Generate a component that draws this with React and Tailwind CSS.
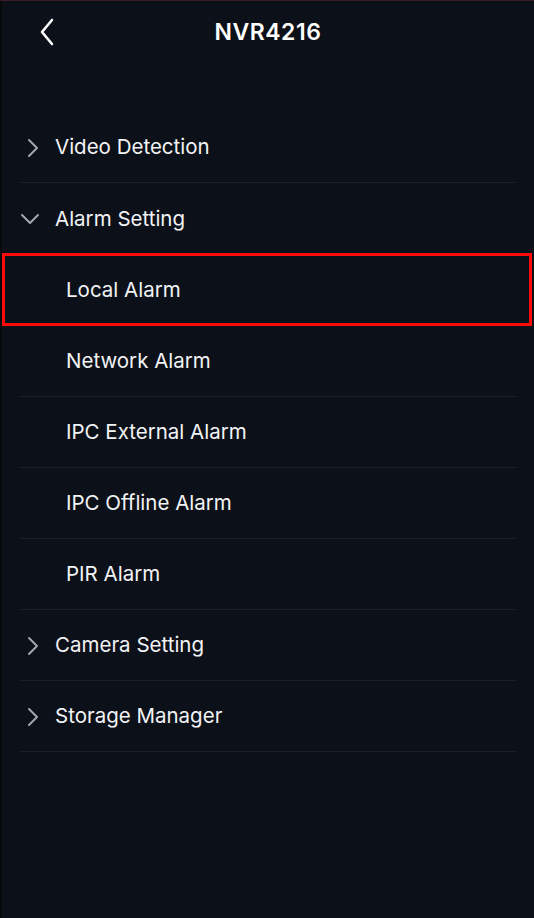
import React from "react";

const font = { fontFamily: "Inter, 'Noto Sans', sans-serif" };

function ChevronRight() {
  return (
    <svg width="14" height="20" viewBox="0 0 14 20" className="shrink-0">
      <path d="M3 2 L11 10 L3 18" fill="none" stroke="#a3a6ab" strokeWidth="2" strokeLinecap="round" strokeLinejoin="round" />
    </svg>
  );
}
function ChevronDown() {
  return (
    <svg width="20" height="14" viewBox="0 0 20 14" className="shrink-0">
      <path d="M2 3 L10 11 L18 3" fill="none" stroke="#a3a6ab" strokeWidth="2" strokeLinecap="round" strokeLinejoin="round" />
    </svg>
  );
}

function TopRow({ label, open, divider = true }) {
  return (
    <div className={`ml-5 mr-[18px] h-[71px] flex items-center pt-[1px] ${divider ? "border-b border-[#1c2029]" : ""}`}>
      <div className={`w-[35px] flex items-center ${open ? "pl-0" : "pl-[6px]"}`}>
        {open ? <ChevronDown /> : <ChevronRight />}
      </div>
      <span className="text-[20.5px] text-[#f2f3f5]">{label}</span>
    </div>
  );
}

function SubRow({ label, divider = true }) {
  return (
    <div className={`ml-5 mr-[18px] h-[71px] flex items-center pl-[46px] pt-[1px] ${divider ? "border-b border-[#1c2029]" : ""}`}>
      <span className="text-[20.5px] text-[#f2f3f5]">{label}</span>
    </div>
  );
}

export default function App() {
  return (
    <div style={font} className="relative w-[534px] h-[918px] bg-[#0c1018] border-t border-[#3a1c26] overflow-hidden">
      <div className="absolute left-0 top-0 bottom-0 w-[2px] bg-[#07090d]" />
      <div className="relative h-[63px] flex items-center justify-center">
        <svg width="16" height="28" viewBox="0 0 16 28" className="absolute left-[39px] top-[17px]">
          <path d="M13 2 L3 14 L13 26" fill="none" stroke="#ffffff" strokeWidth="2.6" strokeLinecap="round" strokeLinejoin="round" />
        </svg>
        <span className="text-[23px] font-semibold text-white tracking-[0.5px] pl-[2px]">NVR4216</span>
      </div>
      <div className="h-[48px]" />
      <TopRow label="Video Detection" />
      <TopRow label="Alarm Setting" open divider={false} />
      <div className="ml-[2px] mr-[2px] -mt-[1px] h-[73px] border-[3px] border-[#ff0a0a] flex items-center pl-[61px] pt-[2px]">
        <span className="text-[20.5px] text-[#f2f3f5]">Local Alarm</span>
      </div>
      <SubRow label="Network Alarm" />
      <SubRow label="IPC External Alarm" />
      <SubRow label="IPC Offline Alarm" />
      <SubRow label="PIR Alarm" />
      <TopRow label="Camera Setting" />
      <TopRow label="Storage Manager" />
    </div>
  );
}
